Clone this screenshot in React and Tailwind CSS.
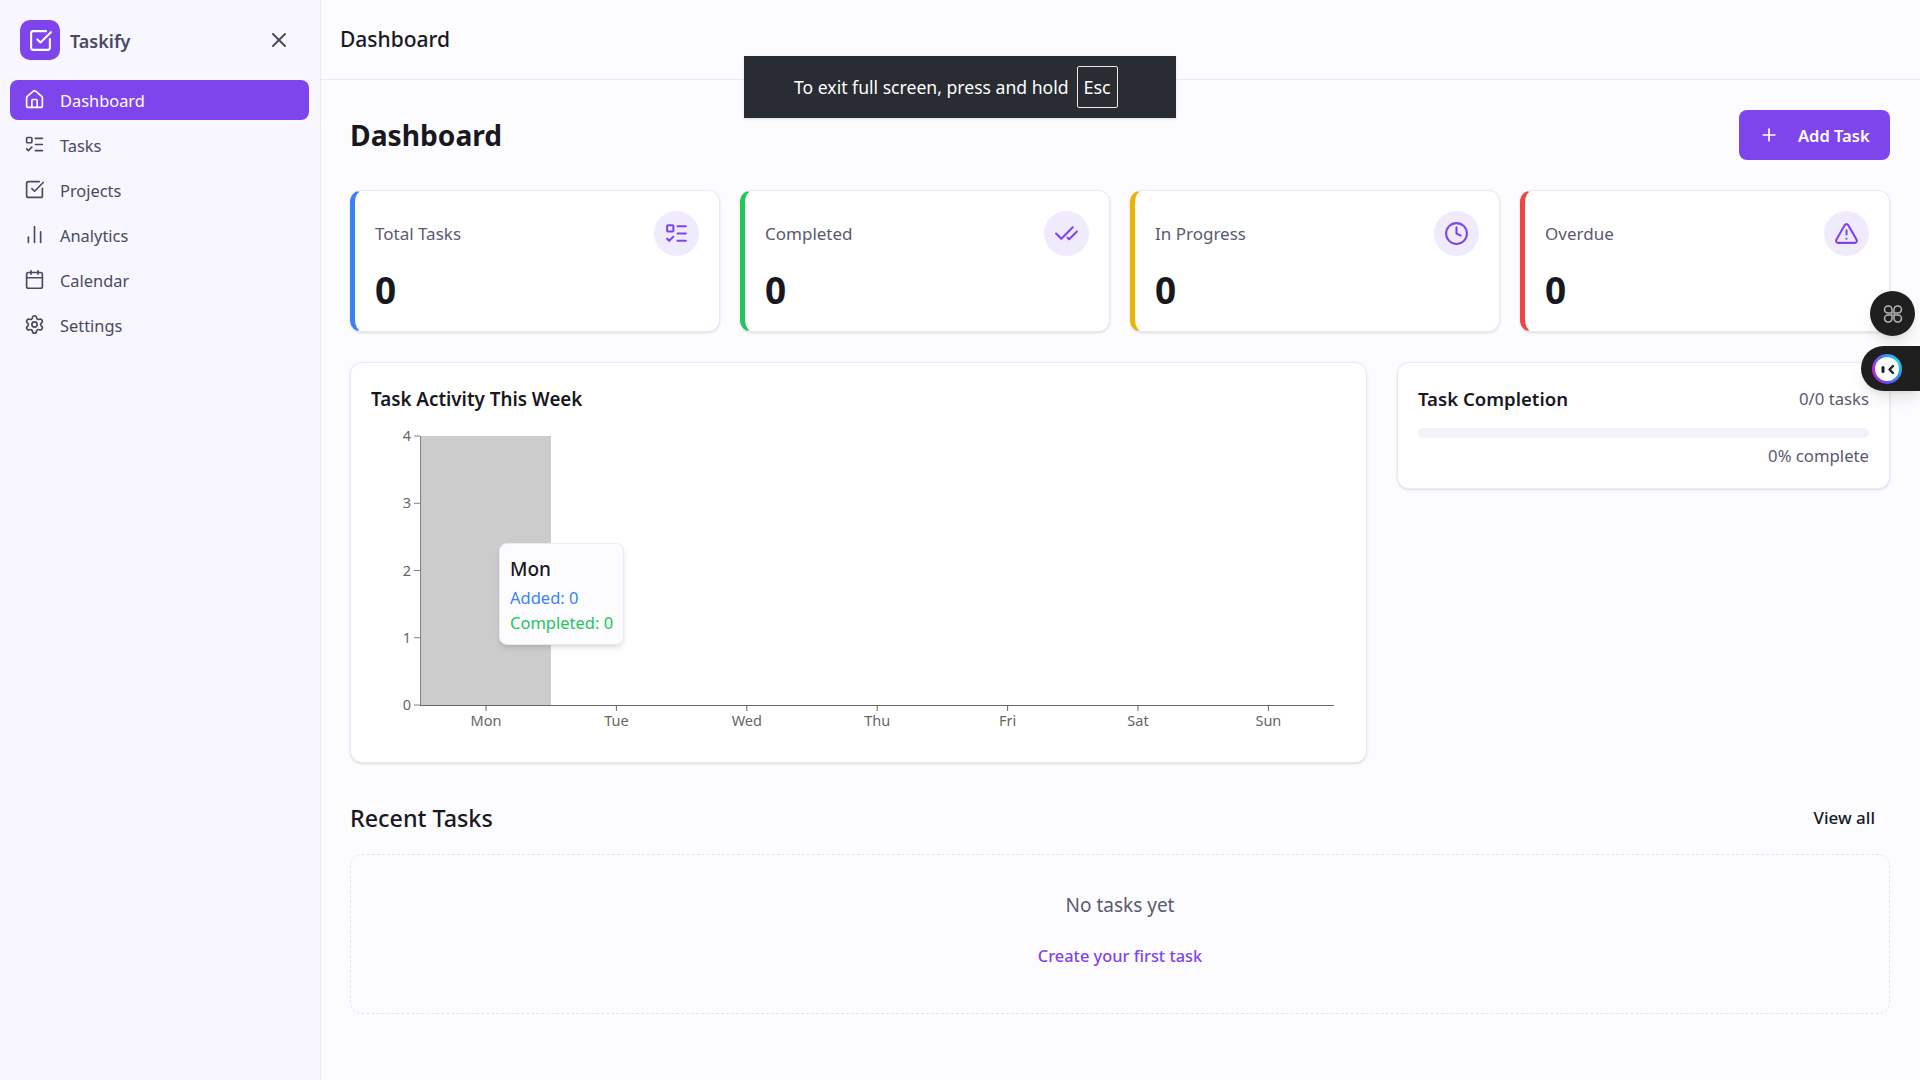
import React from "react";
import { Home, ListTodo, SquareCheckBig, ChartNoAxesColumn, Calendar, Settings, X, Plus, CheckCheck, Clock, TriangleAlert } from "lucide-react";

const nav = [
  { label: "Dashboard", Icon: Home, active: true },
  { label: "Tasks", Icon: ListTodo },
  { label: "Projects", Icon: SquareCheckBig },
  { label: "Analytics", Icon: ChartNoAxesColumn },
  { label: "Calendar", Icon: Calendar },
  { label: "Settings", Icon: Settings },
];

const stats = [
  { label: "Total Tasks", Icon: ListTodo, border: "border-l-[#3b82f6]" },
  { label: "Completed", Icon: CheckCheck, border: "border-l-[#22c55e]" },
  { label: "In Progress", Icon: Clock, border: "border-l-[#eab308]" },
  { label: "Overdue", Icon: TriangleAlert, border: "border-l-[#ef4444]" },
];

const days = ["Mon", "Tue", "Wed", "Thu", "Fri", "Sat", "Sun"];
const yTicks = [[4, 19], [3, 86.25], [2, 153.5], [1, 220.75], [0, 288]];

function Chart() {
  return (
    <div className="relative h-[326px] w-full">
      <svg width="975" height="326" className="block">
        <rect x="50" y="19" width="130" height="269" fill="#cccccc" />
        <line x1="49.5" y1="19" x2="49.5" y2="288" stroke="#808080" />
        <line x1="49" y1="288.5" x2="963" y2="288.5" stroke="#666666" />
        {yTicks.map(([v, y]) => (
          <g key={v}>
            <line x1="43" x2="49" y1={y} y2={y} stroke="#808080" />
            <text x="40" y={y + 5} textAnchor="end" fontSize="14.5" fill="#666666">{v}</text>
          </g>
        ))}
        {days.map((d, i) => {
          const x = 115 + i * 130.4;
          return (
            <g key={d}>
              <line x1={x} x2={x} y1="288" y2="294" stroke="#666666" />
              <text x={x} y="309" textAnchor="middle" fontSize="14.5" fill="#666666">{d}</text>
            </g>
          );
        })}
      </svg>
      <div className="absolute left-[128px] top-[126px] h-[102px] w-[125px] rounded-lg border border-[#ebe9f3] bg-[#fcfcff] pl-[10px] pt-[11px] shadow-md">
        <p className="text-[19px] leading-[29px] font-medium text-[#18181f]">Mon</p>
        <p className="text-[16.5px] leading-[27px] text-[#3b82f6]">Added: 0</p>
        <p className="text-[16.5px] leading-[24px] text-[#22c55e]">Completed: 0</p>
      </div>
    </div>
  );
}

export default function App() {
  return (
    <div className="relative flex h-[1080px] w-[1920px] overflow-hidden bg-[#fcfcff] font-['Noto_Sans',sans-serif] text-[#18181f]">
      <aside className="h-full w-[321px] shrink-0 border-r border-[#ebe9f3] bg-[#f8f6ff]">
        <div className="flex h-[80px] items-center justify-between pl-[20px] pr-[29px]">
          <div className="flex items-center gap-[10px]">
            <div className="flex h-[40px] w-[40px] items-center justify-center rounded-[10px] bg-[#7f45ec]">
              <SquareCheckBig size={25} color="#ffffff" strokeWidth={2} />
            </div>
            <span className="mt-[2px] text-[18px] font-semibold text-[#4a4a5e]">Taskify</span>
          </div>
          <X size={24} color="#4a4a5e" />
        </div>
        <nav className="flex flex-col gap-[5px] pl-[10px] pr-[11px]">
          {nav.map(({ label, Icon, active }) => (
            <div
              key={label}
              className={`flex h-[40px] items-center gap-[15px] rounded-lg px-[14px] text-[16.4px] ${active ? "bg-[#7f45ec] text-white" : "text-[#4a4a5e]"}`}
            >
              <Icon size={21} strokeWidth={1.9} className="-mt-[1px]" />
              <span className="mt-[2px]">{label}</span>
            </div>
          ))}
        </nav>
      </aside>

      <main className="min-w-0 flex-1">
        <header className="flex h-[80px] items-center border-b border-[#ebe9f3] pl-[19px]">
          <h2 className="mt-[1px] text-[21px] font-medium">Dashboard</h2>
        </header>
        <div className="px-[29px] pr-[30px] pt-[30px]">
          <div className="flex h-[50px] items-center justify-between">
            <h1 className="mt-[1px] text-[28.2px] font-bold">Dashboard</h1>
            <button className="flex h-[50px] w-[151px] items-center gap-[19px] rounded-lg bg-[#7f45ec] pl-[20px] text-[16.5px] font-semibold text-white">
              <Plus size={20} />
              <span className="mt-[2px]">Add Task</span>
            </button>
          </div>

          <div className="mt-[30px] grid grid-cols-4 gap-[20px]">
            {stats.map(({ label, Icon, border }) => (
              <div key={label} className={`h-[142px] rounded-xl border border-[#ebe9f3] border-l-[5px] bg-white pl-[20px] pr-[20px] pt-[20px] shadow-sm ${border}`}>
                <div className="flex items-start justify-between">
                  <span className="mt-[10px] text-[17px] text-[#5a5a6e]">{label}</span>
                  <div className="flex h-[45px] w-[45px] items-center justify-center rounded-full bg-[#f0eafd] text-[#7f45ec]">
                    <Icon size={25} />
                  </div>
                </div>
                <p className="mt-[9px] text-[37px] leading-[50px] font-bold text-[#18181f]">0</p>
              </div>
            ))}
          </div>

          <div className="mt-[30px] grid grid-cols-[1fr_493px] items-start gap-[30px]">
            <section className="h-[401px] rounded-xl border border-[#ebe9f3] bg-white px-[20px] pt-[20px] shadow-sm">
              <h3 className="h-[34px] text-[18.8px] leading-[32px] font-semibold">Task Activity This Week</h3>
              <Chart />
            </section>
            <section className="h-[127px] rounded-xl border border-[#ebe9f3] bg-white px-[20px] pt-[20px] shadow-sm">
              <div className="flex h-[32px] items-center justify-between">
                <h3 className="text-[18.6px] font-semibold">Task Completion</h3>
                <span className="text-[16.7px] text-[#5a5a6e]">0/0 tasks</span>
              </div>
              <div className="mt-[13px] h-[10px] rounded-full bg-[#f3f1f9]" />
              <p className="mt-[5px] text-right text-[16.7px] text-[#5a5a6e]">0% complete</p>
            </section>
          </div>

          <div className="mt-[39px] flex h-[32px] items-center justify-between pr-[15px]">
            <h2 className="text-[23.3px] font-medium">Recent Tasks</h2>
            <span className="text-[17px] font-medium">View all</span>
          </div>
          <div className="mt-[20px] flex h-[160px] flex-col items-center rounded-xl border border-dashed border-[#e6e4ee] pt-[36px]">
            <p className="text-[19px] leading-[28px] text-[#5a5a6e]">No tasks yet</p>
            <p className="mt-[23px] text-[16.4px] leading-[28px] font-medium text-[#7f45ec]">Create your first task</p>
          </div>
        </div>
      </main>

      <div className="absolute left-[744px] top-[56px] flex h-[62px] w-[432px] items-center gap-[8px] bg-[#292c33] pl-[50px] shadow-sm">
        <span className="text-[17.6px] text-white">To exit full screen, press and hold</span>
        <span className="flex h-[42px] w-[41px] items-center justify-center rounded-[2px] border border-[#e8e8e8] text-[18px] text-white">Esc</span>
      </div>

      <div className="absolute left-[1870px] top-[291px] flex h-[45px] w-[45px] items-center justify-center rounded-full bg-[#1f1f1f] shadow-lg">
        <svg width="20" height="20" viewBox="0 0 20 20" fill="none" stroke="#b5b5b5" strokeWidth="1.5">
          <path d="M9 9H5a3.5 3.5 0 0 1 0-7h.5A3.5 3.5 0 0 1 9 5.5zM11 9h4a3.5 3.5 0 0 0 0-7h-.5A3.5 3.5 0 0 0 11 5.5zM9 11H5a3.5 3.5 0 0 0 0 7h.5A3.5 3.5 0 0 0 9 14.5zM11 11h4a3.5 3.5 0 0 1 0 7h-.5a3.5 3.5 0 0 1-3.5-3.5z" />
        </svg>
      </div>
      <div className="absolute left-[1861px] top-[346px] flex h-[45px] w-[59px] items-center rounded-l-full bg-[#1f1f1f] pl-[11px] shadow-lg">
        <div className="flex h-[30px] w-[30px] items-center justify-center rounded-full bg-[conic-gradient(from_200deg,#7c3aed,#c026d3,#3b82f6,#22d3ee,#3b82f6,#7c3aed)]">
          <svg width="24" height="24" viewBox="0 0 24 24">
            <circle cx="12" cy="12" r="12" fill="#ffffff" />
            <rect x="6.5" y="9" width="3" height="7" rx="1.5" fill="#1f1f1f" />
            <path d="M18 9l-3.5 3.5 3.5 3.5" fill="none" stroke="#1f1f1f" strokeWidth="2.4" strokeLinecap="round" strokeLinejoin="round" />
          </svg>
        </div>
      </div>
    </div>
  );
}
